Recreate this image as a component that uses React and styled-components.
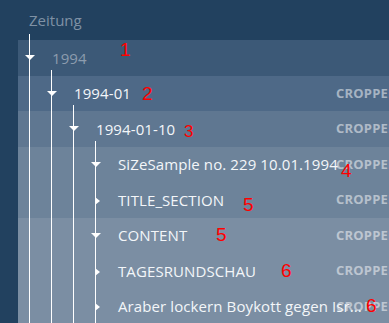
import React from "react";
import styled, { createGlobalStyle } from "styled-components";

const GlobalStyle = createGlobalStyle`
  html, body {
    margin: 0;
    padding: 0;
    overflow: hidden;
    background: #22415f;
  }
  body {
    font-family: "Open Sans", "Noto Sans", sans-serif;
  }
`;

// the long article title is shortened the way the tool shows it
const shorten = (s, n) => (s.length > n ? s.slice(0, n) + "..." : s);

const tree = {
  label: "1994",
  muted: true,
  open: true,
  shade: "#3c5977",
  note: { n: 1, x: 102, y: -0.5 },
  children: [
    {
      label: "1994-01",
      open: true,
      cropped: true,
      shade: "#4e6987",
      note: { n: 2, x: 124, y: 8 },
      children: [
        {
          label: "1994-01-10",
          open: true,
          cropped: true,
          shade: "#5f7791",
          note: { n: 3, x: 166, y: 11.5, size: 17 },
          children: [
            {
              label: "SiZeSample no. 229 10.01.1994",
              open: true,
              cropped: true,
              shade: "#6d839a",
              note: { n: 4, x: 323, y: 14 },
              children: [
                {
                  label: "TITLE_SECTION",
                  cropped: true,
                  shade: "#6d839a",
                  note: { n: 5, x: 225, y: 12.5 },
                },
                {
                  label: "CONTENT",
                  open: true,
                  cropped: true,
                  shade: "#7b8ea3",
                  note: { n: 5, x: 198, y: 7 },
                  children: [
                    {
                      label: "TAGESRUNDSCHAU",
                      cropped: true,
                      shade: "#7b8ea3",
                      note: { n: 6, x: 263, y: 7.5 },
                    },
                    {
                      label: shorten("Araber lockern Boykott gegen Israel", 32),
                      cropped: true,
                      shade: "#7b8ea3",
                      note: { n: 6, x: 348, y: 7 },
                    },
                  ],
                },
              ],
            },
          ],
        },
      ],
    },
  ],
};

function Node({ node, depth }) {
  const indent = Math.min(depth, 3);
  return (
    <Group $indent={indent}>
      <Row $indent={indent} $shade={node.shade}>
        <Toggle>
          <Caret $open={node.open} />
        </Toggle>
        {node.cropped && <Cropped>Cropped</Cropped>}
        <Title $muted={node.muted}>{node.label}</Title>
        {node.note && (
          <Note $x={node.note.x} $y={node.note.y} $size={node.note.size}>
            {node.note.n}
          </Note>
        )}
      </Row>
      {node.open &&
        node.children &&
        node.children.map((c, i) => <Node key={i} node={c} depth={depth + 1} />)}
    </Group>
  );
}

export default function App() {
  return (
    <Page>
      <GlobalStyle />
      <Header>Zeitung</Header>
      <Tree>
        <Node node={tree} depth={0} />
      </Tree>
    </Page>
  );
}

const Page = styled.div`
  width: 389px;
  min-height: 323px;
  background: #22415f;
`;

const Header = styled.div`
  height: 40px;
  display: flex;
  align-items: center;
  padding-left: 29px;
  font-size: 15px;
  color: #7f91a5;
`;

const Tree = styled.div`
  margin-left: 18px;
`;

const Group = styled.div`
  position: relative;

  &::before {
    content: "";
    position: absolute;
    z-index: 1;
    left: ${(p) => 11 + p.$indent * 22}px;
    top: -6px;
    bottom: 0;
    width: 1px;
    background: #ffffff;
  }
`;

const Row = styled.div`
  position: relative;
  display: flex;
  align-items: center;
  height: 35.5px;
  padding-left: ${(p) => p.$indent * 22}px;
  background: ${(p) => p.$shade};
`;

const Toggle = styled.span`
  flex: 0 0 34px;
  display: flex;
  align-items: center;
  height: 100%;
`;

const Caret = styled.span`
  width: 0;
  height: 0;
  ${(p) =>
    p.$open
      ? `
    margin-left: 7px;
    border-left: 5px solid transparent;
    border-right: 5px solid transparent;
    border-top: 5px solid #ffffff;
  `
      : `
    margin-left: 11px;
    margin-top: 2px;
    border-top: 4.5px solid transparent;
    border-bottom: 4.5px solid transparent;
    border-left: 5px solid #ffffff;
  `}
`;

const Title = styled.span`
  position: relative;
  z-index: 1;
  font-size: 15px;
  color: ${(p) => (p.$muted ? "#8c9cae" : "#f3f6f9")};
  white-space: nowrap;
  letter-spacing: 0.1px;
`;

const Cropped = styled.span`
  position: absolute;
  left: 318px;
  top: 0;
  line-height: 35.5px;
  font-size: 13px;
  font-weight: 700;
  text-transform: uppercase;
  letter-spacing: 0.2px;
  white-space: nowrap;
  color: rgba(255, 255, 255, 0.5);
`;

const Note = styled.span`
  position: absolute;
  z-index: 2;
  left: ${(p) => p.$x}px;
  top: ${(p) => p.$y}px;
  font-family: "Liberation Sans", Arial, sans-serif;
  font-size: ${(p) => p.$size || 19}px;
  line-height: 1;
  color: #ff0000;
`;
